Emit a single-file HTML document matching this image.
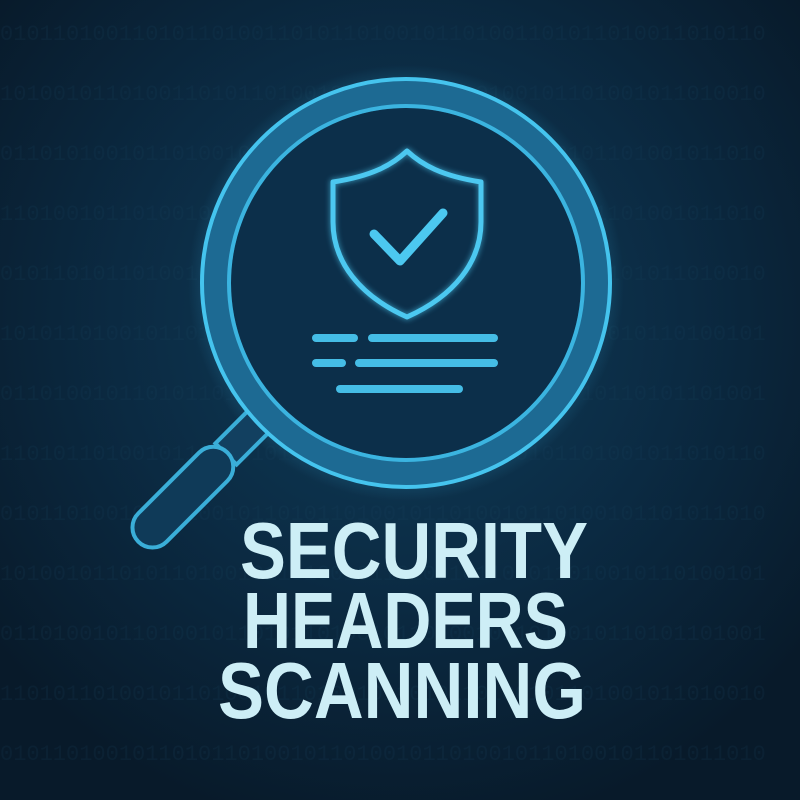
<!DOCTYPE html>
<html><head><meta charset="utf-8"><style>
html,body{margin:0;padding:0;width:800px;height:800px;overflow:hidden;background:#0a1e30}
svg{display:block}
</style></head><body>
<svg width="800" height="800" viewBox="0 0 800 800" xmlns="http://www.w3.org/2000/svg">
<defs>
<radialGradient id="bg" cx="50%" cy="40%" r="65%">
<stop offset="0" stop-color="#0f3d5a"/>
<stop offset="0.55" stop-color="#0b2a42"/>
<stop offset="1" stop-color="#081a2a"/>
</radialGradient>
<radialGradient id="glow" cx="50%" cy="50%" r="50%">
<stop offset="0.8" stop-color="#3fc8ff" stop-opacity="0.3"/>
<stop offset="1" stop-color="#3fc8ff" stop-opacity="0"/>
</radialGradient>
<filter id="blur" x="-20%" y="-20%" width="140%" height="140%"><feGaussianBlur stdDeviation="3"/></filter>
</defs>
<rect width="800" height="800" fill="url(#bg)"/>
<g font-family="Liberation Mono, monospace" font-size="22" fill="#1a4560" opacity="0.18">
<text x="0" y="40">0101101001101011010011010110100101101001101011010011010110</text>
<text x="0" y="100">1010010110100110101101001011010010110100101101001011010010</text>
<text x="0" y="160">0110101001011010010110101101001011010010110101101001011010</text>
<text x="0" y="220">1101001011010010110100101101011010010110100101101001011010</text>
<text x="0" y="280">0101101011010010110100101101001011010110100101101011010010</text>
<text x="0" y="340">1010110100101101001011010010110101101001011010010110100101</text>
<text x="0" y="400">0110100101101011010010110100101101001011010010110101101001</text>
<text x="0" y="460">1101011010010110100101101001011010110100101101001011010110</text>
<text x="0" y="520">0101101001011010010110101101001011010010110100101101011010</text>
<text x="0" y="580">1010010110101101001011010010110100101101011010010110100101</text>
<text x="0" y="640">0110100101101001011010110100101101001011010010110101101001</text>
<text x="0" y="700">1101011010010110100101101001011010110100101101001011010010</text>
<text x="0" y="760">0101101001011010110100101101001011010010110100101101011010</text>
</g>
<circle cx="406" cy="283" r="218" fill="url(#glow)"/>
<g transform="translate(226,454) rotate(45)" stroke="#3aaed8" stroke-width="4">
<rect x="-15" y="-46" width="30" height="46" fill="#124060"/>
<rect x="-20" y="-2" width="40" height="126" rx="20" fill="#0f3a58"/>
</g>
<circle cx="406" cy="283" r="175" fill="#0c2f4a"/>
<circle cx="406" cy="283" r="191" fill="none" stroke="#1d6a93" stroke-width="27"/>
<circle cx="406" cy="283" r="204" fill="none" stroke="#45c4ee" stroke-width="4"/>
<circle cx="406" cy="283" r="177" fill="none" stroke="#3bb4e0" stroke-width="4"/>
<g fill="none" stroke="#4cc8f0" stroke-linecap="round" stroke-linejoin="round">
<path d="M407 151 C392 165 372 176 333 182 L333 222 C333 262 360 296 407 317 C454 296 481 262 481 222 L481 182 C442 176 422 165 407 151 Z" stroke-width="6" filter="url(#blur)" opacity="0.6"/>
<path d="M407 151 C392 165 372 176 333 182 L333 222 C333 262 360 296 407 317 C454 296 481 262 481 222 L481 182 C442 176 422 165 407 151 Z" stroke-width="5"/>
<path d="M374 234 L400 261 L443 213" stroke-width="9"/>
<g stroke="#45bde6" stroke-width="8">
<line x1="316" y1="338" x2="354" y2="338"/>
<line x1="372" y1="338" x2="494" y2="338"/>
<line x1="316" y1="363" x2="342" y2="363"/>
<line x1="359" y1="363" x2="494" y2="363"/>
<line x1="340" y1="389" x2="459" y2="389"/>
</g>
</g>
<g font-family="Liberation Sans, sans-serif" font-weight="bold" font-size="80" fill="#cdeef6">
<text x="240" y="578" textLength="348" lengthAdjust="spacingAndGlyphs">SECURITY</text>
<text x="243" y="648" textLength="325" lengthAdjust="spacingAndGlyphs">HEADERS</text>
<text x="218" y="718" textLength="368" lengthAdjust="spacingAndGlyphs">SCANNING</text>
</g>
</svg>
</body></html>
